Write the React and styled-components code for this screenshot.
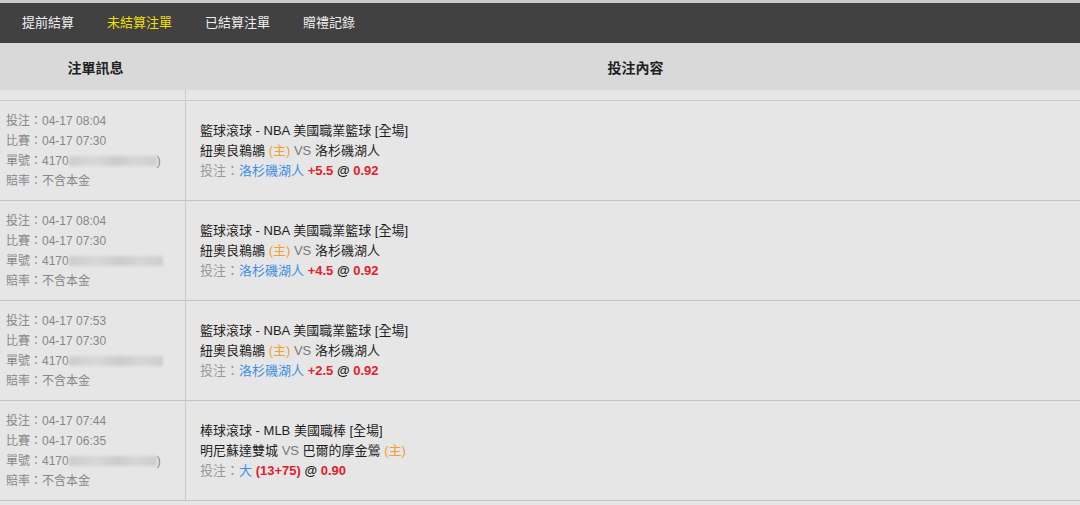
import React from 'react';
import styled, { createGlobalStyle } from 'styled-components';

const GlobalStyle = createGlobalStyle`
    body {
        margin: 0;
        background: #e6e6e6;
        font-family: "Liberation Sans", Arial, "Noto Sans CJK TC", sans-serif;
    }
`;

const Page = styled.div`
    width: 1080px;
    height: 505px;
    overflow: hidden;
    background: #e6e6e6;
    border-top: 3px solid #c9c9c9;
    box-sizing: border-box;
`;

const NavBar = styled.div`
    height: 40px;
    box-sizing: border-box;
    padding: 0 0 4px 22px;
    background: #414141;
    display: flex;
    align-items: center;
    gap: 33px;
`;

const NavItem = styled.div`
    font-size: 13px;
    color: ${p => (p.$active ? '#f2e000' : '#f0f0f0')};
`;

const Columns = styled.div`
    display: grid;
    grid-template-columns: 185px 1fr;
`;

const HeadCell = styled.div`
    height: 47px;
    background: #d9d9d9;
    display: flex;
    align-items: center;
    justify-content: center;
    padding-left: 6px;
    font-size: 14px;
    font-weight: bold;
    color: #222;
`;

const SpacerCell = styled.div`
    height: 10px;
    border-bottom: 1px solid #cbcbcb;
    border-left: ${p => (p.$right ? '1px solid #cbcbcb' : 'none')};
`;

const InfoCell = styled.div`
    height: 100px;
    border-bottom: 1px solid #c4c4c4;
    padding: 10px 0 0 6px;
    box-sizing: border-box;
    display: flex;
    flex-direction: column;
    font-size: 12px;
    line-height: 20px;
    color: #868686;
`;

const Blur = styled.span`
    display: inline-block;
    width: ${p => p.$w}px;
    height: 10px;
    vertical-align: -1px;
    background: linear-gradient(90deg, #cdcdcd, #d8d8d8 30%, #cbcbcb 55%, #d6d6d6 75%, #cecece);
    filter: blur(1.5px);
`;

const ContentCell = styled.div`
    height: 100px;
    border-bottom: 1px solid #c4c4c4;
    border-left: 1px solid #cbcbcb;
    padding-left: 14px;
    box-sizing: border-box;
    display: flex;
    flex-direction: column;
    justify-content: center;
    font-size: 13px;
    line-height: 20px;
    color: #1e1e1e;
`;

const Home = styled.span`
    color: #f0a030;
`;

const Muted = styled.span`
    color: ${p => p.$c || '#999'};
`;

const Pick = styled.span`
    color: #3d8fe0;
`;

const Odds = styled.span`
    color: #e0202a;
    font-weight: bold;
`;

const At = styled.span`
    color: #222;
    font-weight: bold;
`;

const bets = [
    {
        placed: '04-17 08:04', start: '04-17 07:30', blur: 88, paren: true,
        league: '籃球滾球 - NBA 美國職業籃球 [全場]',
        home: '紐奧良鵜鶘', away: '洛杉磯湖人', homeFirst: true,
        pick: '洛杉磯湖人', line: '+5.5', odds: '0.92',
    },
    {
        placed: '04-17 08:04', start: '04-17 07:30', blur: 94,
        league: '籃球滾球 - NBA 美國職業籃球 [全場]',
        home: '紐奧良鵜鶘', away: '洛杉磯湖人', homeFirst: true,
        pick: '洛杉磯湖人', line: '+4.5', odds: '0.92',
    },
    {
        placed: '04-17 07:53', start: '04-17 07:30', blur: 94,
        league: '籃球滾球 - NBA 美國職業籃球 [全場]',
        home: '紐奧良鵜鶘', away: '洛杉磯湖人', homeFirst: true,
        pick: '洛杉磯湖人', line: '+2.5', odds: '0.92',
    },
    {
        placed: '04-17 07:44', start: '04-17 06:35', blur: 88, paren: true,
        league: '棒球滾球 - MLB 美國職棒 [全場]',
        home: '巴爾的摩金鶯', away: '明尼蘇達雙城', homeFirst: false,
        pick: '大', line: '(13+75)', odds: '0.90',
    },
];

function App() {
    return (
        <Page>
            <GlobalStyle />
            <NavBar>
                <NavItem>提前結算</NavItem>
                <NavItem $active>未結算注單</NavItem>
                <NavItem>已結算注單</NavItem>
                <NavItem>贈禮記錄</NavItem>
            </NavBar>
            <Columns>
                <HeadCell>注單訊息</HeadCell>
                <HeadCell>投注內容</HeadCell>
                <SpacerCell />
                <SpacerCell $right />
                {bets.map((b, i) => (
                    <React.Fragment key={i}>
                        <InfoCell>
                            <div>投注：{b.placed}</div>
                            <div>比賽：{b.start}</div>
                            <div>單號：4170<Blur $w={b.blur} />{b.paren ? ')' : ''}</div>
                            <div>賠率：不含本金</div>
                        </InfoCell>
                        <ContentCell>
                            <div>{b.league}</div>
                            {b.homeFirst ? (
                                <div>{b.home} <Home>(主)</Home> <Muted $c="#777">VS</Muted> {b.away}</div>
                            ) : (
                                <div>{b.away} <Muted $c="#777">VS</Muted> {b.home} <Home>(主)</Home></div>
                            )}
                            <div>
                                <Muted>投注：</Muted><Pick>{b.pick}</Pick> <Odds>{b.line}</Odds> <At>@</At> <Odds>{b.odds}</Odds>
                            </div>
                        </ContentCell>
                    </React.Fragment>
                ))}
            </Columns>
        </Page>
    );
}

export default App;
